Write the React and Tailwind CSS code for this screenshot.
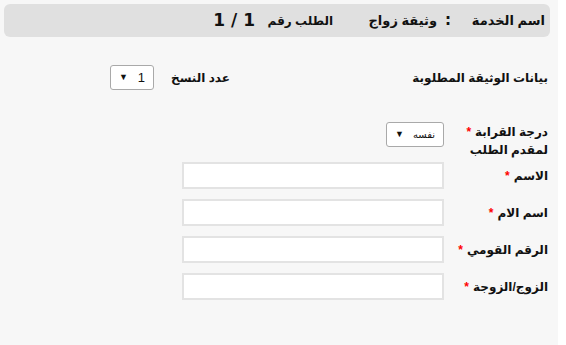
import React from "react";

const font = { fontFamily: '"Liberation Sans", "DejaVu Sans", Arial, sans-serif' };
const wide = { fontFamily: '"DejaVu Sans", Verdana, sans-serif' };

const Star = () => <span className="text-[#ff0000] mr-1">*</span>;

const FakeSelect = ({ value, width, small }) => (
  <div
    className={`${width} h-[25px] bg-white border border-[#a9a9a9] rounded-[3px] flex items-center justify-between pr-[8px] pl-[8px] text-[#111]`}
  >
    <span className={small ? "text-[10px] font-normal" : "text-[13px] font-normal"}>{value}</span>
    <span className="text-[9px] leading-none">▼</span>
  </div>
);

const InputRow = ({ label }) => (
  <div className="flex items-center h-[27px] mb-[10px]">
    <div className="w-[104px] text-[12px] font-bold text-[#111]">
      {label}
      <Star />
    </div>
    <div className="w-[262px] h-[27px] bg-white border-2 border-[#e3e3e3]"></div>
  </div>
);

export default function App() {
  return (
    <div className="w-[566px] h-[345px] bg-white" style={font}>
      <div dir="rtl" className="w-[558px] h-[345px] bg-[#f7f7f7] pt-1 pl-1 pr-2">
        <div className="h-[33px] bg-[#e0e0e0] rounded-md flex items-center pr-[5px] text-[#111] font-bold">
          <span className="w-[94px] text-[13px] whitespace-nowrap">اسم الخدمة</span>
          <span className="w-[14px] text-[15px]" style={wide}>:</span>
          <span className="w-[104px] text-[13px] whitespace-nowrap">وثيقة زواج</span>
          <span className="w-[78px] text-[12px] whitespace-nowrap">الطلب رقم</span>
          <span className="text-[17px] whitespace-pre" dir="ltr" style={wide}>1 / 1</span>
        </div>

        <div className="pr-[2px]">
          <div className="flex items-center h-[25px] mt-[28px]">
            <span className="w-[318px] text-[12px] font-bold text-[#111]">بيانات الوثيقة المطلوبة</span>
            <span className="w-[76px] text-[12px] font-bold text-[#111]">عدد النسخ</span>
            <FakeSelect value="1" width="w-[44px]" />
          </div>

          <div className="flex items-start mt-[32px] h-[40px]">
            <div className="w-[104px] text-[12px] font-bold text-[#111] leading-[18px] pt-[1px]">
              درجة القرابة
              <Star />
              <br />
              لمقدم الطلب
            </div>
            <FakeSelect value="نفسه" width="w-[58px]" small />
          </div>

          <InputRow label="الاسم" />
          <InputRow label="اسم الام" />
          <InputRow label="الرقم القومي" />
          <InputRow label="الزوج/الزوجة" />
        </div>
      </div>
    </div>
  );
}
